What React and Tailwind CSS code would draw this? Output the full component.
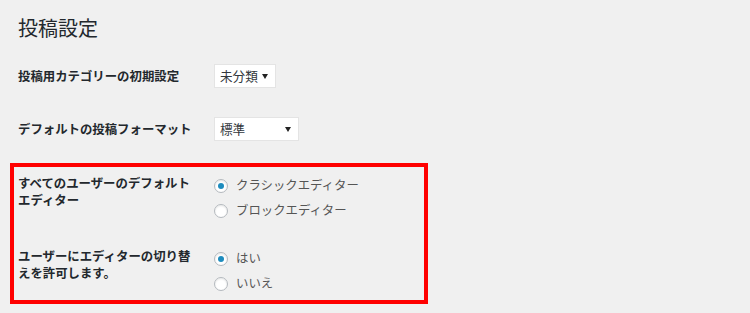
import React from "react";

const Select = ({ value, width }) => (
    <div
        className={`${width} h-[24px] bg-white border border-[#e4e4e4] flex items-center justify-between pl-[5px] pr-[7px] text-[12.6px] text-[#32373c]`}
    >
        <span>{value}</span>
        <svg width="6" height="5" viewBox="0 0 6 5">
            <path d="M0 0 L6 0 L3 5 Z" fill="#222" />
        </svg>
    </div>
);

const Radio = ({ label, checked }) => (
    <div className="h-[25px] flex items-center gap-[8px]">
        <span className="w-[14px] h-[14px] rounded-full bg-white border border-[#b4b9be] shadow-[inset_0_1px_2px_rgba(0,0,0,0.1)] flex items-center justify-center">
            {checked && <span className="w-[6px] h-[6px] rounded-full bg-[#1e8cbe]" />}
        </span>
        <span className="text-[12.4px] text-[#555]">{label}</span>
    </div>
);

const App = () => {
    return (
        <div className="w-[750px] h-[313px] bg-[#f0f0f0] overflow-hidden font-['Noto_Sans_CJK_JP',sans-serif] text-[#23282d]">
            <h1 className="pl-[18px] pt-[14px] text-[20px] leading-[28px] font-normal">投稿設定</h1>

            {/* select rows */}
            <div className="mt-[22px] flex items-center">
                <div className="w-[214px] pl-[18px] text-[12.4px] font-bold">投稿用カテゴリーの初期設定</div>
                <Select value="未分類" width="w-[62px]" />
            </div>
            <div className="mt-[29px] flex items-center">
                <div className="w-[214px] pl-[18px] text-[12.4px] font-bold">デフォルトの投稿フォーマット</div>
                <Select value="標準" width="w-[85px]" />
            </div>

            {/* highlighted editor settings */}
            <div className="mt-[22px] ml-[10px] w-[418px] h-[141px] border-4 border-[#ff0000] pl-[4px] pt-[6px]">
                <div className="flex">
                    <div className="w-[196px] shrink-0 pr-[16px] mt-[2px] text-[12.4px] leading-[17px] font-bold">
                        すべてのユーザーのデフォルトエディター
                    </div>
                    <div className="flex flex-col">
                        <Radio label="クラシックエディター" checked />
                        <Radio label="ブロックエディター" />
                    </div>
                </div>
                <div className="mt-[23px] flex">
                    <div className="w-[196px] shrink-0 pr-[16px] mt-[2px] text-[12.4px] leading-[16.5px] font-bold">
                        ユーザーにエディターの切り替えを許可します。
                    </div>
                    <div className="flex flex-col">
                        <Radio label="はい" checked />
                        <Radio label="いいえ" />
                    </div>
                </div>
            </div>
        </div>
    );
};

export default App;
